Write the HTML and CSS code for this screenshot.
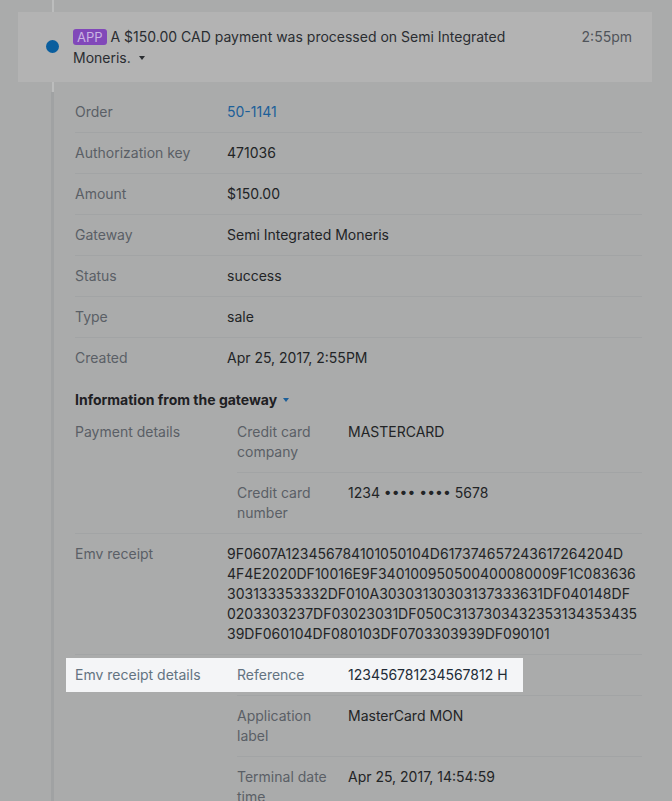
FILE: index.html
```html
<!DOCTYPE html>
<html lang="en">
<head>
    <meta charset="UTF-8">
    <meta name="viewport" content="width=device-width, initial-scale=1.0">
    <title>Payment details</title>
    <link rel="stylesheet" href="styles.css">
</head>
<body>

    <div class="timeline">
        <!-- 事件标题 -->
        <div class="event-head">
            <span class="event-dot"></span>
            <div class="event-text">
                <span class="badge">APP</span> A $150.00 CAD payment was processed on Semi Integrated Moneris. <span class="caret"></span>
            </div>
            <div class="event-time">2:55pm</div>
        </div>

        <!-- 详细信息 -->
        <div class="details">
            <div class="row">
                <div class="label">Order</div>
                <div class="value"><a class="link" href="#">50-1141</a></div>
            </div>
            <div class="row">
                <div class="label">Authorization key</div>
                <div class="value">471036</div>
            </div>
            <div class="row">
                <div class="label">Amount</div>
                <div class="value">$150.00</div>
            </div>
            <div class="row">
                <div class="label">Gateway</div>
                <div class="value">Semi Integrated Moneris</div>
            </div>
            <div class="row">
                <div class="label">Status</div>
                <div class="value">success</div>
            </div>
            <div class="row">
                <div class="label">Type</div>
                <div class="value">sale</div>
            </div>
            <div class="row last">
                <div class="label">Created</div>
                <div class="value">Apr 25, 2017, 2:55PM</div>
            </div>

            <h3 class="section-title">Information from the gateway <span class="caret blue"></span></h3>

            <div class="row group">
                <div class="label">Payment details</div>
                <div class="sub">
                    <div class="sub-row">
                        <div class="sub-label">Credit card company</div>
                        <div class="value">MASTERCARD</div>
                    </div>
                    <div class="sub-row">
                        <div class="sub-label">Credit card number</div>
                        <div class="value">1234 •••• •••• 5678</div>
                    </div>
                </div>
            </div>
            <div class="row">
                <div class="label">Emv receipt</div>
                <div class="value">9F0607A123456784101050104D617374657243617264204D<br>4F4E2020DF10016E9F340100950500400080009F1C083636<br>303133353332DF010A30303130303137333631DF040148DF<br>0203303237DF03023031DF050C3137303432353134353435<br>39DF060104DF080103DF0703303939DF090101</div>
            </div>
            <div class="row group spotlight">
                <div class="label">Emv receipt details</div>
                <div class="sub">
                    <div class="sub-row">
                        <div class="sub-label">Reference</div>
                        <div class="value">123456781234567812 H</div>
                    </div>
                    <div class="sub-row">
                        <div class="sub-label">Application label</div>
                        <div class="value">MasterCard MON</div>
                    </div>
                    <div class="sub-row">
                        <div class="sub-label">Terminal date time</div>
                        <div class="value">Apr 25, 2017, 14:54:59</div>
                    </div>
                </div>
            </div>
        </div>
    </div>

</body>
</html>
```

FILE: styles.css
```css
* {
    margin: 0;
    padding: 0;
    box-sizing: border-box;
}

body {
    background: #aaabab;
    font-family: 'Inter', 'Noto Sans', sans-serif;
    font-size: 14px;
    line-height: 20px;
    color: #222426;
    overflow: hidden;
}

/* 时间线 */
.timeline {
    position: relative;
    padding-top: 12px;
    height: 801px;
}

.timeline::before {
    content: "";
    position: absolute;
    top: 0;
    bottom: 0;
    left: 52px;
    width: 2px;
    background: #bcbdbd;
}

/* 事件标题 */
.event-head {
    position: relative;
    display: flex;
    justify-content: space-between;
    margin: 0 20px 0 18px;
    height: 70px;
    padding: 14px 20px 0 55px;
    background: #b3b3b3;
    font-size: 14px;
    line-height: 21px;
    color: #2a2d31;
}

.event-dot {
    position: absolute;
    left: 28px;
    top: 28px;
    width: 13px;
    height: 13px;
    border-radius: 50%;
    background: #0a5e9e;
}

.event-text {
    width: 470px;
}

.badge {
    display: inline-block;
    padding: 0 4px;
    border-radius: 3px;
    background: #8148b9;
    color: #c9b4e2;
    font-size: 13px;
    line-height: 16px;
}

.caret {
    display: inline-block;
    margin-left: 4px;
    border-left: 3.5px solid transparent;
    border-right: 3.5px solid transparent;
    border-top: 4px solid #2a2d31;
    vertical-align: 3px;
}

.caret.blue {
    margin-left: 2px;
    border-top-color: #1c5f99;
}

.event-time {
    color: #50545a;
}

/* 详细信息 */
.details {
    position: relative;
    margin: 10px 30px 0 51px;
    padding-left: 21px;
    border-left: 3px solid #a0a2a3;
}

.row {
    position: relative;
    display: grid;
    grid-template-columns: 152px 1fr;
    padding: 10px 0;
    border-bottom: 1px solid #a2a4a5;
}

.row.last {
    border-bottom: none;
}

.row.group {
    padding: 0;
}

.row.group > .label {
    padding: 10px 0;
}

.label {
    color: #5a5f66;
}

.value {
    color: #222426;
}

.link {
    color: #1c5f99;
    text-decoration: none;
}

.section-title {
    margin: 12px 0 2px;
    font-size: 14px;
    font-weight: 700;
    color: #1e2023;
}

.sub {
    padding-left: 10px;
}

.sub-row {
    display: grid;
    grid-template-columns: 111px 1fr;
    padding: 10px 0;
    border-bottom: 1px solid #a2a4a5;
}

.sub-row:last-child {
    border-bottom: none;
}

.sub-label {
    color: #5a5f66;
    padding-right: 8px;
}

/* 高亮的行 */
.spotlight::before {
    content: "";
    position: absolute;
    top: 3px;
    left: -9px;
    width: 457px;
    height: 34px;
    background: #f4f5f7;
}

.spotlight > .label,
.spotlight .sub-row:first-child {
    position: relative;
}

.spotlight > .label,
.spotlight .sub-row:first-child .sub-label {
    color: #637381;
}

.spotlight .sub-row:first-child .value {
    color: #212b36;
}
```
